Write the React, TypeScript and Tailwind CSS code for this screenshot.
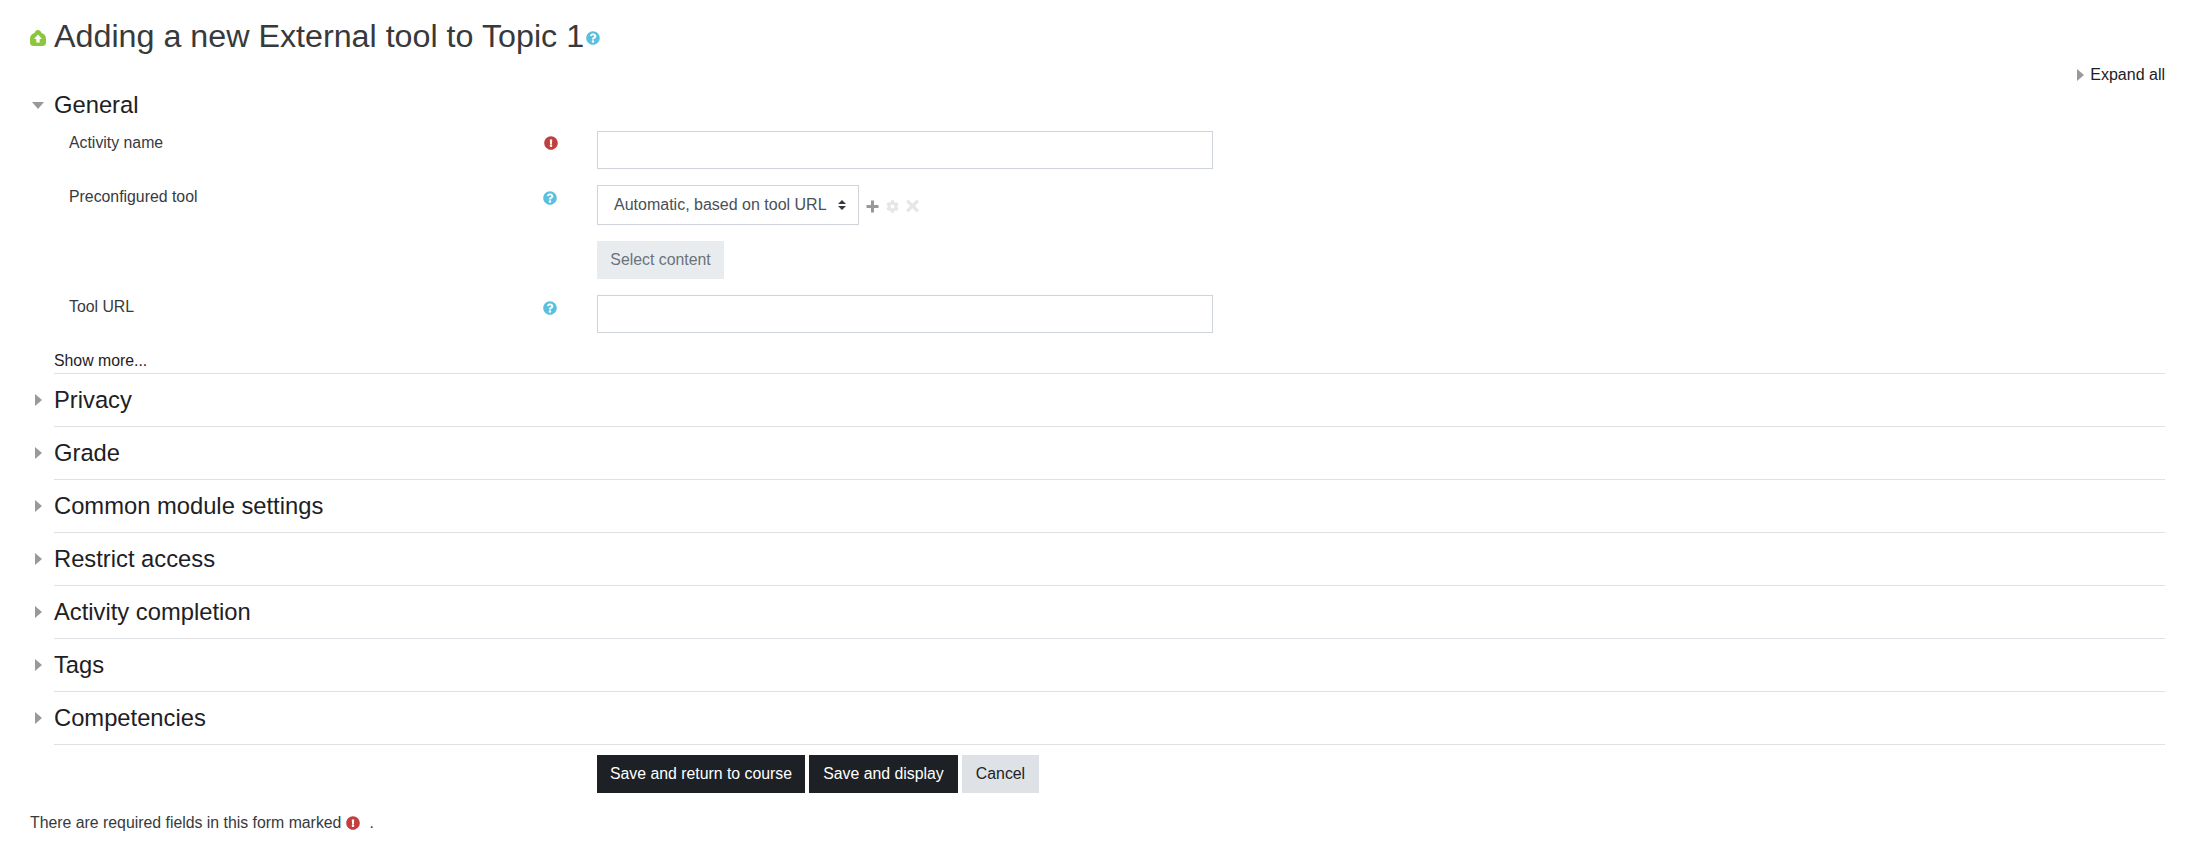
import React from 'react';
import { FaCog, FaExclamationCircle, FaQuestionCircle, FaTimes } from 'react-icons/fa';

const sections = ['Privacy', 'Grade', 'Common module settings', 'Restrict access', 'Activity completion', 'Tags', 'Competencies'];

const ArrowRight = () => (
  <svg width="7" height="12" viewBox="0 0 7 12" className="fill-[#999999]">
    <path d="M0 0 L7 6 L0 12 Z" />
  </svg>
);

const ArrowDown = () => (
  <svg width="12" height="7" viewBox="0 0 12 7" className="fill-[#999999]">
    <path d="M0 0 L12 0 L6 7 Z" />
  </svg>
);

const LtiIcon = () => (
  <svg width="16" height="16" viewBox="0 0 16 16">
    <path d="M8 0 C10 0 11 1.5 11.5 3 C14 3.5 16 6 16 9 L16 12.5 C16 15 14.5 16 12.5 16 L3.5 16 C1.5 16 0 15 0 12.5 L0 9 C0 6 2 3.5 4.5 3 C5 1.5 6 0 8 0 Z" fill="#8cc63f" />
    <path d="M8 4.5 L12 9 L9.7 9 L9.7 12.5 L6.3 12.5 L6.3 9 L4 9 Z" fill="#ffffff" />
  </svg>
);

const PlusIcon = () => (
  <svg width="13" height="13" viewBox="0 0 13 13" className="fill-[#999999]">
    <path d="M5 0.5 L8 0.5 L8 5 L12.5 5 L12.5 8 L8 8 L8 12.5 L5 12.5 L5 8 L0.5 8 L0.5 5 L5 5 Z" />
  </svg>
);

const FormRow = ({ label, required, children }: { label: string; required?: boolean; children: React.ReactNode }) => (
  <div className="flex pb-[16px]">
    <div className="w-[543px] flex justify-between pl-[15px] pr-[40px] pt-[1px]">
      <span className="leading-[22px]">{label}</span>
      {required ? (
        <FaExclamationCircle className="mt-[4px] mr-[-1px] text-[14px] text-[#c13f3f]" />
      ) : (
        <FaQuestionCircle className="mt-[5px] text-[14px] text-[#5bc0de]" />
      )}
    </div>
    {children}
  </div>
);

export default function App() {
  return (
    <div className="min-h-[866px] bg-white pl-[30px] pr-[32px] font-['Liberation_Sans',Arial,sans-serif] text-[15.84px] text-[#373a3c]">
      <div className="flex items-center pt-[10px] h-[62px]">
        <span className="w-[24px] mt-[4px]"><LtiIcon /></span>
        <h2 className="text-[32.25px] leading-[38px] text-[#373a3c]">Adding a new External tool to Topic 1</h2>
        <FaQuestionCircle className="ml-[2px] mt-[3px] text-[14px] text-[#5bc0de]" />
      </div>

      <div className="flex justify-end items-center gap-[6px] h-[26px] text-[16px] text-[#1d2125]">
        <ArrowRight />
        <span>Expand all</span>
      </div>

      <div className="flex items-center h-[30px] mt-[2px]">
        <span className="w-[24px] pl-[2px] flex"><ArrowDown /></span>
        <h3 className="text-[23.76px] text-[#1d2125]">General</h3>
      </div>

      <div className="pt-[11px] ml-[24px] border-b border-[#dee2e6]">
        <FormRow label="Activity name" required>
          <input type="text" className="w-[616px] h-[38px] border border-[#ced4da] bg-white" />
        </FormRow>
        <div className="flex">
          <div className="w-[543px] flex justify-between pl-[15px] pr-[40px] pt-[1px]">
            <span className="leading-[22px]">Preconfigured tool</span>
            <FaQuestionCircle className="mt-[5px] text-[14px] text-[#5bc0de]" />
          </div>
          <div className="flex items-center gap-[7px]">
            <div className="relative">
              <select className="w-[262px] h-[40px] appearance-none border border-[#ced4da] bg-white pl-[16px] text-[16px] text-[#495057]">
                <option>Automatic, based on tool URL</option>
              </select>
              <svg width="8" height="10" viewBox="0 0 8 10" className="absolute right-[13px] top-[15px] fill-[#343a40]">
                <path d="M4 0 L8 4 L0 4 Z M0 6 L8 6 L4 10 Z" />
              </svg>
            </div>
            <span className="flex items-center gap-[7px] mt-[2px]">
              <PlusIcon />
              <FaCog className="w-[13px] h-[13px] text-[#e6e6e6]" />
              <FaTimes className="w-[13px] h-[18px] text-[#e6e6e6]" />
            </span>
          </div>
        </div>
        <div className="pl-[543px] py-[16px]">
          <button className="h-[38px] w-[127px] bg-[#e9ecef] text-[#6a737b]">Select content</button>
        </div>
        <FormRow label="Tool URL">
          <input type="text" className="w-[616px] h-[38px] border border-[#ced4da] bg-white" />
        </FormRow>
        <div className="leading-[24px] h-[24px] text-[#1d2125]">Show more...</div>
      </div>

      {sections.map((name) => (
        <div key={name} className="flex">
          <span className="w-[24px] pl-[5px] pt-[20px]"><ArrowRight /></span>
          <div className="flex-1 h-[53px] flex items-center border-b border-[#dee2e6] text-[23.76px] text-[#1d2125]">{name}</div>
        </div>
      ))}

      <div className="flex gap-[4px] pl-[567px] pt-[10px]">
        <button className="h-[38px] w-[208px] bg-[#1d2125] text-white">Save and return to course</button>
        <button className="h-[38px] w-[149px] bg-[#1d2125] text-white">Save and display</button>
        <button className="h-[38px] w-[77px] bg-[#dee2e6] text-[#1d2125]">Cancel</button>
      </div>

      <div className="flex items-center pt-[19px] leading-[22px]">
        <span>There are required fields in this form marked</span>
        <FaExclamationCircle className="mx-[5px] text-[14px] text-[#c13f3f]" />
        <span className="ml-[4px]">.</span>
      </div>
    </div>
  );
}
